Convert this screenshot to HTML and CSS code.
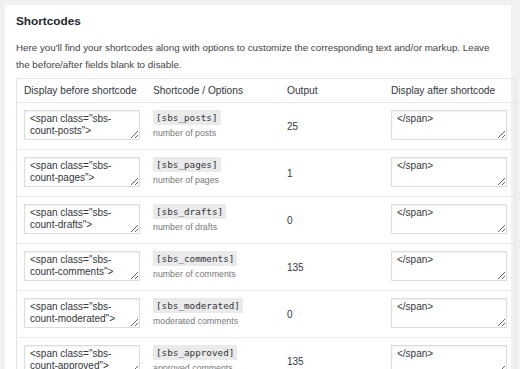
FILE: index.html
```html
<!DOCTYPE html>
<html lang="en">
<head>
    <meta charset="UTF-8">
    <meta name="viewport" content="width=device-width, initial-scale=1.0">
    <title>Shortcodes</title>
    <link rel="stylesheet" href="styles.css">
</head>
<body>
    <div class="panel">
        <h2 class="titulo">Shortcodes</h2>
        <p class="desc">Here you'll find your shortcodes along with options to customize the corresponding text and/or markup. Leave the before/after fields blank to disable.</p>

        <table class="tabla">
            <thead>
                <tr>
                    <th class="col-antes">Display before shortcode</th>
                    <th class="col-code">Shortcode / Options</th>
                    <th class="col-out">Output</th>
                    <th class="col-despues">Display after shortcode</th>
                </tr>
            </thead>
            <tbody>
                <tr>
                    <td><textarea>&lt;span class="sbs-count-posts"&gt;</textarea></td>
                    <td><code>[sbs_posts]</code><span class="nota">number of posts</span></td>
                    <td class="salida">25</td>
                    <td><textarea>&lt;/span&gt;</textarea></td>
                </tr>
                <tr>
                    <td><textarea>&lt;span class="sbs-count-pages"&gt;</textarea></td>
                    <td><code>[sbs_pages]</code><span class="nota">number of pages</span></td>
                    <td class="salida">1</td>
                    <td><textarea>&lt;/span&gt;</textarea></td>
                </tr>
                <tr>
                    <td><textarea>&lt;span class="sbs-count-drafts"&gt;</textarea></td>
                    <td><code>[sbs_drafts]</code><span class="nota">number of drafts</span></td>
                    <td class="salida">0</td>
                    <td><textarea>&lt;/span&gt;</textarea></td>
                </tr>
                <tr>
                    <td><textarea>&lt;span class="sbs-count-comments"&gt;</textarea></td>
                    <td><code>[sbs_comments]</code><span class="nota">number of comments</span></td>
                    <td class="salida">135</td>
                    <td><textarea>&lt;/span&gt;</textarea></td>
                </tr>
                <tr>
                    <td><textarea>&lt;span class="sbs-count-moderated"&gt;</textarea></td>
                    <td><code>[sbs_moderated]</code><span class="nota">moderated comments</span></td>
                    <td class="salida">0</td>
                    <td><textarea>&lt;/span&gt;</textarea></td>
                </tr>
                <tr>
                    <td><textarea>&lt;span class="sbs-count-approved"&gt;</textarea></td>
                    <td><code>[sbs_approved]</code><span class="nota">approved comments</span></td>
                    <td class="salida">135</td>
                    <td><textarea>&lt;/span&gt;</textarea></td>
                </tr>
            </tbody>
        </table>
    </div>
</body>
</html>
```

FILE: styles.css
```css
body {
    margin: 0;
    background-color: #f1f1f1;
    font-family: "Liberation Sans", Arial, sans-serif;
    color: #444;
    overflow: hidden;
    height: 369px;
}

.panel {
    margin: 5px 0 0 5px;
    width: 495px;
    height: 400px;
    padding: 0 0 0 11px;
    background-color: white;
}

.titulo {
    margin: 0;
    padding-top: 8px;
    font-size: 11.8px;
    line-height: 16px;
    color: #23282d;
}

.desc {
    margin: 10px 0 0;
    font-size: 9.8px;
    line-height: 17px;
    width: 485px;
}

.tabla {
    margin-top: 5px;
    width: 499px;
    border-collapse: collapse;
    border: 1px solid #e5e5e5;
    table-layout: fixed;
    font-size: 10px;
}

/* Anchos de columnas (sin padding) */
.col-antes { width: 115px; }
.col-code { width: 120px; }
.col-out { width: 90px; }
.col-despues { width: 117px; }

.tabla th {
    text-align: left;
    font-weight: normal;
    color: #32373c;
    font-size: 10.2px;
    height: 23px;
    padding: 0 7px;
    white-space: nowrap;
    border-bottom: 1px solid #e5e5e5;
}

.tabla td {
    vertical-align: top;
    padding: 7px 7px 0;
    height: 39px;
    border-bottom: 1px solid #ebebeb;
}

.tabla td.salida {
    vertical-align: middle;
    padding-top: 0;
    color: #32373c;
}

textarea {
    display: block;
    box-sizing: border-box;
    width: 116px;
    height: 30px;
    margin: 0;
    padding: 2px 5px;
    border: 1px solid #ddd;
    box-shadow: inset 0 1px 2px rgba(0, 0, 0, 0.07);
    font-family: "Liberation Sans", Arial, sans-serif;
    font-size: 10px;
    line-height: 12px;
    color: #32373c;
    overflow: hidden;
}

code {
    display: inline-block;
    background-color: #eaeaea;
    padding: 2px 3px;
    font-family: "DejaVu Sans Mono", monospace;
    font-size: 9.3px;
    line-height: 11px;
    color: #32373c;
}

.nota {
    display: block;
    margin-top: 3px;
    font-size: 8.8px;
    color: #777;
}
```
